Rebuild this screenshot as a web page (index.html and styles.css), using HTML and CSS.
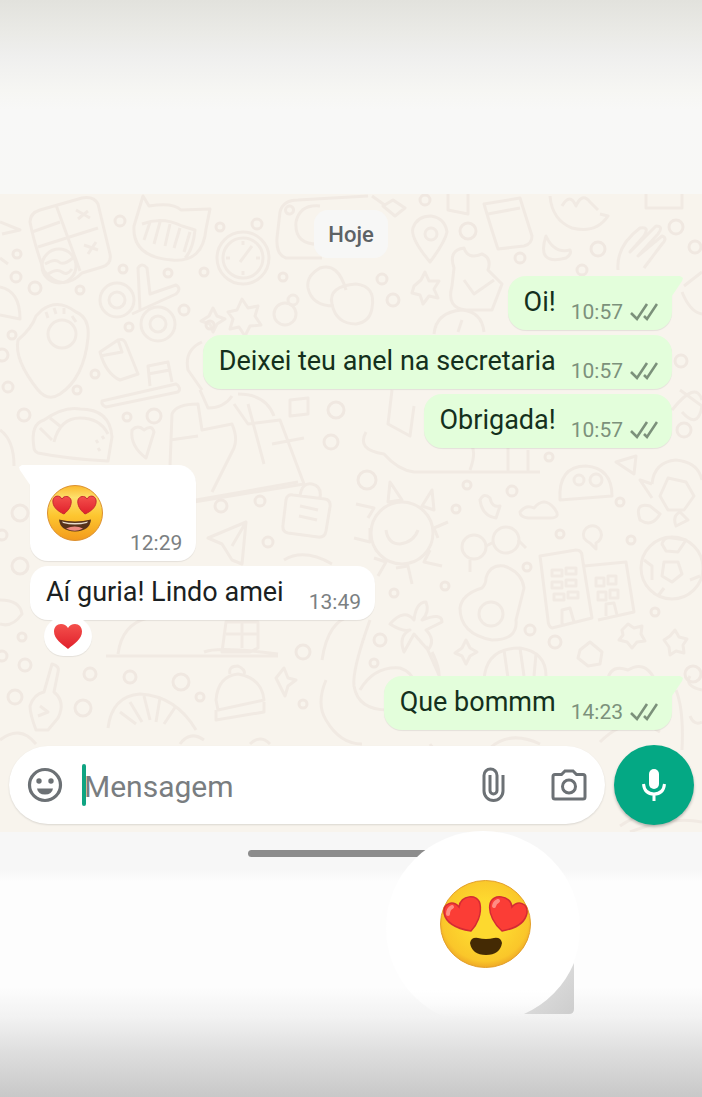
FILE: index.html
```html
<!DOCTYPE html>
<html lang="pt-BR">
<head>
  <meta charset="UTF-8">
  <meta name="viewport" content="width=device-width, initial-scale=1.0">
  <title>Conversa</title>
  <link rel="stylesheet" href="styles.css">
</head>
<body>
  <!-- Shared icons -->
  <svg class="sprite" aria-hidden="true">
    <defs>
      <radialGradient id="face" cx="50%" cy="45%" r="56%">
        <stop offset="0.4" stop-color="#fdd92f"/>
        <stop offset="0.85" stop-color="#fac62a"/>
        <stop offset="1" stop-color="#eda525"/>
      </radialGradient>
      <linearGradient id="face-warm" x1="0" y1="0" x2="0" y2="1">
        <stop offset="0" stop-color="#fbb92c"/>
        <stop offset="0.22" stop-color="#fde06c"/>
        <stop offset="0.55" stop-color="#fdc62f"/>
        <stop offset="1" stop-color="#f39a1c"/>
      </linearGradient>
      <linearGradient id="red" x1="0" y1="0" x2="0" y2="1">
        <stop offset="0" stop-color="#f4504c"/>
        <stop offset="1" stop-color="#e0202b"/>
      </linearGradient>
      <linearGradient id="fold" x1="0" y1="0" x2="1" y2="1">
        <stop offset="0.3" stop-color="#dedede"/>
        <stop offset="1" stop-color="#cdcdcd"/>
      </linearGradient>
      <linearGradient id="fade" x1="0" y1="0" x2="0" y2="1">
        <stop offset="0.82" stop-color="#fff"/>
        <stop offset="0.96" stop-color="#fff" stop-opacity="0"/>
      </linearGradient>
    </defs>
    <symbol id="ticks" viewBox="0 0 28 20">
      <path d="M1 10l6 6L17 1M14 13l3 3L27 1" fill="none" stroke="currentColor" stroke-width="2.600"/>
    </symbol>
    <symbol id="heart" viewBox="0 0 30 27">
      <path d="M15 26C9 21 1 16 1 8.500C1 4 4 1 8 1c3 0 5.500 1.500 7 4c1.500-2.500 4-4 7-4c4 0 7 3 7 7.500C29 16 21 21 15 26z"/>
    </symbol>
  </svg>

  <header class="top"></header>

  <main class="chat">
    <!-- Wallpaper doodles -->
    <svg class="wallpaper" viewBox="0 194 702 638" preserveAspectRatio="xMidYMin slice" aria-hidden="true">
      <!-- left side, upper -->
      <path d="M30 222q0-9 10-12l42-12q12-2 16 6l12 50q2 10-8 13l-20 6q-20 20-38-2q-10-28-14-49zM56 205l24 66M38 247l60-19M32 232l28-10M78 219l10-8M76 210l14 8M88 254l8-12M84 245l14 5"/>
      <circle cx="59" cy="266" r="17"/><path d="M45 264q10-6 14-2t14-4M48 274q9-6 14-2t10-3"/>
      <path d="M143 196l6 10q24-4 32 4l29-1l-4 20q-3 34-34 31q-40-3-38-34zM142 224q20-8 40 2l13 4q-2 20-10 28M150 222l-6 18M160 222l-6 22M170 224l-5 22M180 228l-6 20M190 232l-6 20"/>
      <circle cx="243" cy="258" r="26"/><circle cx="243" cy="258" r="20"/><path d="M240 262l12-16M243 241v4M243 271v4M226 258h4M256 258h4"/>
      <path d="M322 258h-36q-10-3-9-20l3-26q3-12 18-12l70-4M322 244q-28 2-26-22q4-18 24-16M290 206a4 4 0 1 1-1 8a4 4 0 0 1 1-8"/>
      <circle cx="117" cy="300" r="17"/><circle cx="117" cy="300" r="8"/><circle cx="158" cy="324" r="17"/><circle cx="158" cy="324" r="8"/>
      <path d="M140 310l-2-42q4-6 9 0l3 26l26-9q6 4 0 9l-44 20"/>
      <path d="M42 310q16-12 34 2q14 6 12 26q-4 40-28 56q-12 8-22-4q-24-30-20-50q14-12 18-24zM46 312l2 6M54 308l2 6M64 308v6M72 316l4 6"/><circle cx="62" cy="334" r="14"/>
      <path d="M0 287q20 4 20 32l-20-4M0 222l20 8l-18 4M0 258l8 6M100 352l18-12q6-2 8 4l12 30l-18 6q-14-6-20-28zM118 340l4 12l-22 4"/>
      <path d="M102 401l74-17q6 4 2 8l-72 15q-5-2-4-6zM150 386l-2-20l20-4l4 20M148 374l22-4"/>
      <path d="M201 321l8-5l4-8l4 8l8 3l-8 5l-4 8l-3-8z"/>
      <path d="M237 310l5-11l6 9l10-2l-3 10l6 9l-11 1l-5 10l-6-9l-9 2l3-10l-5-7z"/>
      <circle cx="285" cy="314" r="11"/><circle cx="293" cy="300" r="5"/>
      <path d="M346 290q-8-28-26-22q-14 8-12 20q4 18 26 18M372 308q4-22-16-24q-28 2-24 20q4 20 24 20q14-2 16-16z"/>
      <path d="M34 448q-4-24 10-28q20-14 36-11q30 0 32 28l-4 24q-40-2-70-8q-4-2-4-5zM54 442q6-24 26-24q20 0 28 16M40 428l12 12M50 418l10 8M96 440l2 3M102 436l2 3M98 448l2 3"/>
      <path d="M132 430q6-6 12 0q8-6 10 2l-8 26q-16-12-14-28z"/>
      <path d="M202 390l-14-20q-4-20 14-28M170 466l2-52q4-10 26-10l4 26l30-6q6 14 2 24l-22 44M200 390l8 18q16 0 24-12M234 404l14 20l32-4l24 64l-110 18M248 404l16 60M170 440l28-4M272 444l32-6"/>
      <path d="M290 400l18-2v16l-18 2zM238 394q28 0 36 22"/>

      <!-- right side, upper -->
      <path d="M430 262q-20-24-17-34q4-12 18-12q14 2 16 16q-2 10-17 30z"/><circle cx="431" cy="234" r="6"/>
      <path d="M484 204l36-6l12 38q0 8-8 10l-26 3q-6-18-14-45zM488 214l32-6"/>
      <path d="M550 196q2 24 22 32q24 6 36-12l-8-2M562 206q8-14 14 0q6-14 14-4l8 8M546 236q-10 30 20 22q6-4 4-8q-16 4-24-14z"/>
      <path d="M646 190v18h36v-18M618 270q-2-24 22-42q10-2 4 8l-14 16l26-26q8 0 2 8l-20 22l24-20q6 2 0 8l-18 24"/>
      <path d="M454 268q-6-18 10-20q4 12 18 6q10 4 6 16l14 14l-10 26h-26q-20-2-14-24zM464 280l10 14l20-14M434 334q2-22 28-24q20 2 22 22M462 320l-4 12"/>
      <path d="M414 286l7-6l4-8l4 9h10l-5 8l4 9l-9-2l-6 8l-3-9l-8-2z"/>
      <path d="M684 286l18-14M682 292q8 20 20 22M672 410q24-30 30-10M680 390l22 16q-4 24-20 6M366 432q-10 18 18 22q14 16 30 18h126M392 390l-4 34l22 12l4-30M470 470q6-16 2-24M508 472v-24M528 472v-22"/>
      <path d="M383 206l10-6l12 8l-10 8zM448 186v24l20 4v-20M372 196l14 10"/>

      <!-- middle -->
      <circle cx="402" cy="533" r="31"/>
      <path d="M386 530q2 14 14 14q14-2 18-14M390 482l-2 20l14-2zM432 490l-10 16l12 4zM448 522l-14 6l4 10M442 566l-18-4l6-12M412 584l-4-18l-12 2M378 576l8-14l-12-4M354 538l16 4v-14M356 504l18 4l-6 10"/>
      <path d="M286 500q1-6 7-5l32 4q6 1 5 8l-4 24q-1 7-8 6l-30-4q-6-1-5-8zM300 496q2-14 12-12q10 2 8 14M300 506l18 4M299 516l18 4"/>
      <path d="M208 538l38-16l-4 42l-10-4l-10-16zM232 546l14-24M284 560q20-12 48 4"/>
      <path d="M196 500l102-18"/>
      <path d="M560 500q-2-34 26-34q26 2 26 30zM574 480a5 5 0 1 0 10 0a5 5 0 1 0-10 0M590 480a6 6 0 1 0 12 0a6 6 0 1 0-12 0"/>
      <path d="M616 462l18 12l2-18zM520 512q6-8 14-4q10-12 20 0q8 10-4 10h-22q-8-1-8-6zM480 500q4-8 10-2q2 10 10 8l-4 12q-14-2-16-18z"/>
      <circle cx="474" cy="547" r="12"/><circle cx="506" cy="540" r="13"/><path d="M486 546l8-4M470 572v-12M518 540l8 8"/>
      <path d="M584 538a9 9 0 1 1 12 5v6l-6-6q-4-2-6-5z"/>
      <path d="M486 578q4-14 18-12q18 6 20 22l-8 32q2 20-24 20q-32-6-32-32q2-14 22-20q4-4 4-10z"/><circle cx="491" cy="614" r="12"/>
      <path d="M540 556l36-6q6 0 6 6l10 62l-40 10q-4-2-4-8zM584 566l42-4l8 50l-36 8M552 570h10v6h-10zM566 568h10v6h-10zM552 582h10v6h-10zM566 580h10v6h-10zM554 594h10v6h-10zM568 592h10v6h-10zM596 578h8v8h-8zM608 576h8v8h-8zM598 592h8v8h-8zM610 590h8v8h-8zM562 624v-14l8-2l4 14M606 616v-12l8-1l3 12"/>
      <circle cx="672" cy="568" r="31"/><path d="M662 544q2-8 10-6l14 2l-8 12l-12-1zM664 562h14l4 12l-10 8l-10-6zM644 560l8 6v14M690 580l10-4M658 596l6-8"/>
      <path d="M652 484q2-22 24-24q22 2 26 20M652 484l-12-4l12 18M668 478l18 4l8 14l-10 14h-16l-8-14zM640 520q-6-18 10-14l10 8q-8 14-20 6zM676 526q-4-10 4-14l8 8z"/>
      <path d="M106 656h172M118 654q4-30 30-36l30-2M226 622h32v26l-8 4h-28zM226 634h32M242 622v26M204 652q14-6 74 2"/>

      <!-- lower -->
      <path d="M390 624q14-16 24-4q2-18 12-18q4 10-4 18q20-8 20 2l-16 8q10 10 2 20l-14-16l-10 18q-6-16 6-22q-8 2-20-6zM370 620q-18 50-16 66q4 24 34 24M432 652q10 20 6 30M426 646l16 36M360 690q14-24 40-22q12 4 14 14"/>
      <path d="M455 653l7-5l4-8l4 8l7 4l-7 4l-4 8l-4-8z"/>
      <path d="M484 680q2-32 36-32q26 4 26 28M504 650l4 28M520 648l4 28M536 654l-2 22"/>
      <path d="M622 630l6-6l6 4l8-2l-1 8l4 7l-8 1l-5 6l-5-6l-8-2l4-5zM664 640l6-4l5-6l4 7l8 2l-4 6l1 8l-8-2l-6 4l-1-8z"/>
      <path d="M580 650l10-8l12 10l-2 12l-12 2l-10-8zM608 678q4-14 20-8q16-10 26 8"/>
      <path d="M216 700q2-24 22-26q24 4 26 26l-46 10zM230 674q-2-8 8-8q8 4 6 8M216 710v10l48-8v-10M276 678l8-10l4 10l8 2l-8 6l-3 10l-5-10z"/>
      <path d="M52 664q8 2 6 8l-4 20q12 10 4 26l-10 12h-12q-6-16-6-24q4-12 14-14zM40 706l8 6l-10 4M108 728q4-32 32-34q36 2 56 36M120 712l16 12M130 702l12 20M144 696l6 24M160 698l-4 24M176 706l-12 18"/>
      <path d="M326 680q-10 24 0 40q14 24 36 24M322 660q6-40 30-44M0 600q20 0 22 14q-10 14-22 10M0 430q14 10 14 36"/>
      <path d="M676 690q8 20 6 60M690 676q-6 10 12 14M690 716q4 10 12 6M600 742q30-30 60-10M540 744q-30-14-50 4M430 744q18 26 46 8M250 744q10-10 20 0M0 740q20-16 36 4M620 826q30-20 66-16M630 832q40-16 72-10M180 744q10-14 24-4"/>

      <!-- scattered dots -->
      <g class="dots">
        <circle cx="120" cy="221" r="5"/><circle cx="220" cy="227" r="4"/><circle cx="257" cy="224" r="5"/>
        <circle cx="17" cy="254" r="4"/><circle cx="16" cy="277" r="5"/><circle cx="35" cy="288" r="6"/>
        <circle cx="80" cy="290" r="4"/><circle cx="123" cy="269" r="4"/><circle cx="168" cy="273" r="4"/>
        <circle cx="204" cy="272" r="4"/><circle cx="283" cy="277" r="4"/><circle cx="184" cy="310" r="5"/>
        <circle cx="129" cy="327" r="4"/><circle cx="210" cy="325" r="4"/><circle cx="12" cy="335" r="4"/>
        <circle cx="2" cy="355" r="6"/><circle cx="95" cy="374" r="4"/><circle cx="77" cy="390" r="4"/>
        <circle cx="8" cy="387" r="5"/><circle cx="24" cy="415" r="6"/><circle cx="154" cy="416" r="7"/>
        <circle cx="127" cy="417" r="4"/><circle cx="336" cy="410" r="8"/><circle cx="331" cy="442" r="7"/>
        <circle cx="425" cy="200" r="5"/><circle cx="468" cy="231" r="8"/><circle cx="520" cy="258" r="5"/>
        <circle cx="598" cy="249" r="7"/><circle cx="676" cy="227" r="7"/><circle cx="695" cy="247" r="6"/>
        <circle cx="382" cy="279" r="5"/><circle cx="393" cy="300" r="6"/><circle cx="582" cy="270" r="5"/>
        <circle cx="681" cy="361" r="6"/><circle cx="684" cy="430" r="7"/><circle cx="549" cy="457" r="4"/>
        <circle cx="367" cy="480" r="9"/><circle cx="467" cy="485" r="4"/><circle cx="512" cy="491" r="5"/>
        <circle cx="620" cy="502" r="4"/><circle cx="456" cy="509" r="4"/><circle cx="560" cy="534" r="4"/>
        <circle cx="631" cy="540" r="4"/><circle cx="527" cy="567" r="4"/><circle cx="445" cy="586" r="4"/>
        <circle cx="394" cy="593" r="4"/><circle cx="655" cy="612" r="4"/><circle cx="530" cy="630" r="5"/>
        <circle cx="555" cy="642" r="6"/><circle cx="380" cy="640" r="6"/><circle cx="374" cy="663" r="4"/>
        <circle cx="221" cy="506" r="6"/><circle cx="260" cy="501" r="5"/><circle cx="268" cy="542" r="5"/>
        <circle cx="20" cy="513" r="8"/><circle cx="20" cy="566" r="8"/><circle cx="2" cy="535" r="5"/>
        <circle cx="303" cy="652" r="7"/><circle cx="25" cy="665" r="6"/><circle cx="90" cy="674" r="6"/>
        <circle cx="130" cy="677" r="6"/><circle cx="181" cy="682" r="8"/><circle cx="15" cy="697" r="7"/>
        <circle cx="83" cy="708" r="8"/><circle cx="200" cy="697" r="4"/><circle cx="303" cy="704" r="4"/>
        <circle cx="22" cy="637" r="4"/><circle cx="2" cy="656" r="5"/><circle cx="693" cy="674" r="8"/>
      </g>
    </svg>

    <div class="messages">
      <span class="day">Hoje</span>

      <div class="bubble out tail">
        <p>Oi!</p>
        <span class="meta"><time>10:57</time><svg><use href="#ticks"/></svg></span>
      </div>
      <div class="bubble out">
        <p>Deixei teu anel na secretaria</p>
        <span class="meta"><time>10:57</time><svg><use href="#ticks"/></svg></span>
      </div>
      <div class="bubble out">
        <p>Obrigada!</p>
        <span class="meta"><time>10:57</time><svg><use href="#ticks"/></svg></span>
      </div>

      <div class="bubble in tail sticker">
        <svg class="emoji" viewBox="0 0 58 58" role="img" aria-label="Apaixonado">
          <circle cx="29" cy="29" r="27.500" fill="url(#face-warm)" stroke="#dc9030"/>
          <g fill="url(#red)" stroke="#c62830" stroke-width="1">
            <path d="M18 30C11 27 6 22 7 16c1-5 7-5 9-1c2-4 8-3 9 1c1 5-2 10-7 14z"/>
            <path d="M39 30c7-3 12-8 11-14c-1-5-7-5-9-1c-2-4-8-3-9 1c-1 5 2 10 7 14z"/>
          </g>
          <path d="M13 35.500q16 4 32 0q-1 11.500-16 12Q14 47 13 35.500z" fill="#57321a"/>
          <path d="M16 37.500q13 3 26 0l-1 1.500q-12 3-24 0z" fill="#e9dccb"/>
          <path d="M20 44.500q9-4 17 0q-8 4.500-17 0z" fill="#ec8a80"/>
        </svg>
        <span class="meta"><time>12:29</time></span>
      </div>
      <div class="bubble in reacted">
        <p>Aí guria! Lindo amei</p>
        <span class="meta"><time>13:49</time></span>
        <span class="reaction"><svg role="img" aria-label="Coração" fill="url(#red)"><use href="#heart"/></svg></span>
      </div>

      <div class="bubble out tail">
        <p>Que bommm</p>
        <span class="meta"><time>14:23</time><svg><use href="#ticks"/></svg></span>
      </div>
    </div>

    <!-- Message box -->
    <form class="composer">
      <div class="field">
        <button type="button" aria-label="Emojis">
          <svg width="36" height="36" viewBox="0 0 36 36">
            <circle cx="18" cy="18" r="15.500" fill="none" stroke="currentColor" stroke-width="3.200"/>
            <circle cx="12" cy="14" r="2.700"/><circle cx="24" cy="14" r="2.700"/>
            <path d="M10 21.500h16q-1 6-8 6t-8-6z"/>
          </svg>
        </button>
        <span class="caret"></span>
        <input type="text" placeholder="Mensagem" aria-label="Mensagem">
        <button type="button" class="attach" aria-label="Anexar">
          <svg width="24" height="36" viewBox="0 0 24 36">
            <path d="M22 8v16a9.500 9.500 0 0 1-19 0V8.500a6.500 6.500 0 0 1 13 0V23.500a3.500 3.500 0 0 1-7 0V8" fill="none" stroke="currentColor" stroke-width="3"/>
          </svg>
        </button>
        <button type="button" aria-label="Câmera">
          <svg width="36" height="32" viewBox="0 0 36 32">
            <path d="M4 5.500h6.500L14 2h8l3.500 3.500H32q2 0 2 2V28q0 2-2 2H4q-2 0-2-2V7.500q0-2 2-2z" fill="none" stroke="currentColor" stroke-width="3"/>
            <circle cx="18" cy="17.500" r="6.500" fill="none" stroke="currentColor" stroke-width="3"/>
          </svg>
        </button>
      </div>
      <button type="button" class="mic" aria-label="Gravar áudio">
        <svg width="26" height="34" viewBox="0 0 26 34">
          <rect x="8" y="1" width="10" height="20" rx="5"/>
          <path d="M2.500 16q1 10 10.500 10t10.500-10M13 26v7" fill="none" stroke="currentColor" stroke-width="3"/>
        </svg>
      </button>
    </form>
  </main>

  <footer class="bottom">
    <div class="home-bar"></div>
    <svg class="floating" viewBox="386 831 194 194" role="img" aria-label="Apaixonado">
      <circle cx="483" cy="928" r="97" fill="url(#fade)"/>
      <path d="M574 963v46q0 5-5 5h-45A96 96 0 0 0 574 963z" fill="url(#fold)"/>
      <ellipse cx="485.500" cy="924" rx="45" ry="43.500" fill="url(#face)" stroke="#e3a02c" stroke-width="1"/>
      <g fill="#fb3d36" stroke="#d32b34" stroke-width="1.500">
        <path d="M471 931C459 929 446 924 444 913C443 903 453 900 459 907C460 895 478 893 480 904C482 914 477 925 471 931z"/>
        <path d="M502 931C513 929 525 924 527 913C528 903 518 900 512 907C511 895 492 893 490 904C488 914 495 925 502 931z"/>
      </g>
      <path d="M448 914q0-5 4-7M494 906q1-4 4-5" fill="none" stroke="#ff8d84" stroke-width="4" stroke-linecap="round"/>
      <path d="M470 943q1-6 8-5q8 2 16 0q7-1 8 5q-2 12-16 12t-16-12z" fill="#442a04"/>
    </svg>
  </footer>
</body>
</html>
```

FILE: styles.css
```css
* {
  box-sizing: border-box;
  margin: 0;
  padding: 0;
}

body {
  display: flex;
  flex-direction: column;
  min-height: 100vh;
  font-family: Roboto, "Noto Sans", sans-serif;
  color: #1b1f22;
  background: #fefefe;
  overflow-x: hidden;
}

button {
  display: flex;
  border: none;
  background: none;
  color: #6c7175;
  cursor: pointer;
}

button svg {
  fill: currentColor;
}

.sprite {
  position: absolute;
  width: 0;
  height: 0;
}

/* Top */
.top {
  padding-top: 194px;
  background: linear-gradient(#e2e2dd, #eaeae6 32px, #efefee 56px, #f6f6f3 90px, #f8f8f7 110px, #f8f8f6);
}

/* Chat */
.chat {
  position: relative;
  display: flex;
  flex-direction: column;
  gap: 15px;
  padding-bottom: 7px;
  background: #f8f4ed;
  overflow: hidden;
}

.wallpaper {
  position: absolute;
  inset: 0;
  width: 100%;
  height: 100%;
  fill: none;
  stroke: #f1eae3;
  stroke-width: 3;
  stroke-linejoin: round;
}

.dots {
  stroke: #f0e8e1;
}

.messages {
  position: relative;
  display: flex;
  flex-direction: column;
  align-items: flex-start;
  gap: 5px;
  padding: 16px 30px 0;
}

.day {
  align-self: center;
  margin-bottom: 13px;
  padding: 2px 14px 0;
  border-radius: 14px;
  background: #f7f7f6;
  color: #5d6265;
  font-size: 22px;
  font-weight: 500;
  line-height: 46px;
}

.bubble {
  position: relative;
  display: flex;
  align-items: flex-end;
  gap: 15px;
  padding: 0 14px 2px 16px;
  border-radius: 18px;
  box-shadow: 0 1px 1px rgba(0, 0, 0, 0.08);
  font-size: 27px;
  line-height: 52px;
}

.out {
  align-self: flex-end;
  background: #e3fedb;
  color: #14301c;
}

.in {
  background: #fff;
}

.in p {
  margin-right: 10px;
}

/* Tails */
.tail::before {
  content: '';
  position: absolute;
  top: 0;
  width: 30px;
  height: 20px;
  background: inherit;
}

.out.tail::before {
  right: -11px;
  clip-path: polygon(0 0, 90% 0, 100% 10%, 97% 25%, 63% 100%, 0 100%);
}

.in.tail::before {
  left: -11px;
  clip-path: polygon(100% 0, 10% 0, 0 10%, 3% 25%, 37% 100%, 100% 100%);
}

.meta {
  display: flex;
  align-items: center;
  gap: 7px;
  color: #7b7f82;
  font-size: 21px;
  line-height: 31px;
}

.out .meta {
  color: #7c917b;
}

.meta svg {
  width: 28px;
  height: 20px;
}

.sticker {
  gap: 26px;
  padding-top: 19px;
}

.sticker + .bubble {
  margin-bottom: 51px;
}

.out + .in {
  margin-top: 12px;
}

.emoji {
  position: relative;
  width: 58px;
  height: 58px;
  margin-bottom: 17px;
}

.reaction {
  position: absolute;
  top: 51px;
  left: 14px;
  display: flex;
  padding: 6px 9px;
  border-radius: 20px;
  background: #fff;
  box-shadow: 0 1px 1px rgba(0, 0, 0, 0.08);
}

.reaction svg {
  width: 30px;
  height: 27px;
}

/* Message box */
.composer {
  position: relative;
  display: flex;
  align-items: center;
  gap: 9px;
  padding: 0 8px 0 9px;
}

.field {
  flex: 1;
  display: flex;
  align-items: center;
  min-width: 0;
  height: 78px;
  padding: 0 18px;
  border-radius: 39px;
  background: #fff;
  box-shadow: 0 1px 2px rgba(0, 0, 0, 0.12);
}

.caret {
  width: 4px;
  height: 42px;
  margin: 0 -2px 0 19px;
  border-radius: 2px;
  background: #0fa482;
}

.field input {
  flex: 1;
  min-width: 0;
  padding-top: 2px;
  border: none;
  outline: none;
  background: none;
  color: #1b1f22;
  font-family: inherit;
  font-size: 30px;
}

.field input::placeholder {
  color: #797d80;
}

.attach {
  margin-right: 46px;
}

.mic {
  align-items: center;
  justify-content: center;
  width: 80px;
  height: 80px;
  border-radius: 50%;
  background: #04a884;
  box-shadow: 0 2px 3px rgba(0, 0, 0, 0.25);
  color: #fff;
}

/* Bottom */
.bottom {
  position: relative;
  flex: 1;
  min-height: 265px;
  padding-top: 18px;
  background: linear-gradient(#f7f7f7 38px, #fdfdfd 50px, #fdfdfd 155px, #f2f2f2 185px, #dedede 220px, #c8c8c8);
}

.home-bar {
  width: 206px;
  height: 7px;
  margin: 0 auto;
  border-radius: 4px;
  background: #8c8c8c;
}

.floating {
  position: absolute;
  top: -1px;
  left: 55%;
  width: 194px;
  height: 194px;
}
```
